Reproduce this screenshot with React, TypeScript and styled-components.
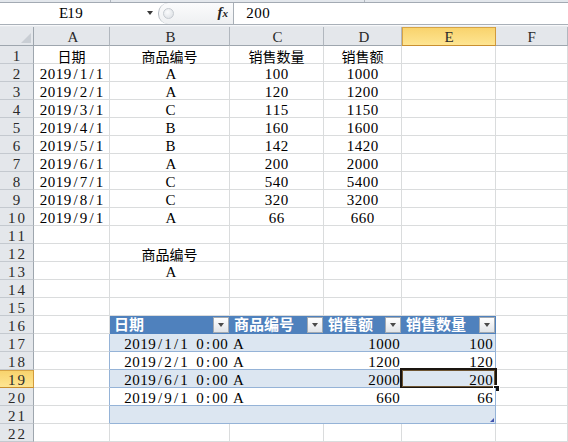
import React from 'react';
import styled, { createGlobalStyle } from 'styled-components';

const SERIF = `"Liberation Serif", "DejaVu Serif", serif`;
const CJK = `"Noto Sans CJK SC", "Noto Sans", sans-serif`;

const GlobalStyle = createGlobalStyle`
  html, body { margin: 0; padding: 0; background: #fff; overflow: hidden; }
  body { width: 568px; height: 442px; }
`;

const Window = styled.div`
  width: 568px;
  height: 442px;
  overflow: hidden;
  display: flex;
  flex-direction: column;
  background: #fff;
`;

const TopStrip = styled.div`
  height: 2px;
  background: #e3e7ec;
  border-bottom: 1px solid #a3aab3;
  display: flex;
`;

const StripSeg = styled.div<{ $w: number }>`
  box-sizing: border-box;
  width: ${(p) => p.$w}px;
  border-right: 1px solid #b0b6be;
`;

const FormulaBar = styled.div`
  height: 21px;
  display: flex;
  align-items: stretch;
  background: #fff;
  border-bottom: 1px solid #a9b0b8;
`;

const NameBox = styled.div`
  width: 142px;
  text-align: center;
  font-family: ${SERIF};
  font-size: 15px;
  line-height: 21px;
  box-sizing: border-box;
  color: #000;
`;

const DropArrow = styled.div`
  width: 16px;
  display: flex;
  align-items: center;
  justify-content: center;
  &::after {
    content: '';
    border-left: 3.5px solid transparent;
    border-right: 3.5px solid transparent;
    border-top: 4px solid #3a3a3a;
  }
`;

const Grip = styled.div`
  width: 76px;
  box-sizing: border-box;
  display: flex;
  align-items: center;
  background: linear-gradient(#fbfbfc, #eef0f2);
  border-left: 1px solid #b7bdc4;
  border-right: 1px solid #a8afb7;
  border-top-left-radius: 10px;
  border-bottom-left-radius: 10px;
`;

const Knob = styled.div`
  width: 9px;
  height: 9px;
  margin-left: 4px;
  border-radius: 50%;
  border: 1px solid #c5cad0;
  background: radial-gradient(circle at 40% 35%, #fafbfc, #d9dde2);
`;

const Fx = styled.div`
  margin-left: auto;
  margin-right: 5px;
  font-family: ${SERIF};
  font-style: italic;
  font-weight: bold;
  font-size: 15px;
  line-height: 15px;
  color: #222;
  & > span {
    font-size: 11px;
  }
`;

const FormulaInput = styled.div`
  flex: 1;
  padding-left: 12px;
  font-family: ${SERIF};
  font-size: 15px;
  line-height: 21px;
  color: #000;
`;

const Gap = styled.div`
  height: 3px;
  background: #e8ebef;
  border-top: 1px solid #f7f8fa;
  box-sizing: border-box;
`;

const Sheet = styled.div`
  display: grid;
  grid-template-columns: 34px 76px 120px 94px 78px 94px 1fr;
  grid-template-rows: 19px repeat(22, 18px);
`;

const Corner = styled.div`
  box-sizing: border-box;
  background: #e4e7eb;
  border-right: 1px solid #9ea6ae;
  border-bottom: 1px solid #9ea6ae;
  display: flex;
  align-items: flex-end;
  justify-content: flex-end;
  padding: 0 2px 2px 0;
  &::after {
    content: '';
    width: 0;
    height: 0;
    border-left: 10px solid transparent;
    border-bottom: 10px solid #c9ced4;
  }
`;

const ColHead = styled.div<{ $active?: boolean }>`
  box-sizing: border-box;
  background: ${(p) => (p.$active ? 'linear-gradient(#f8d26b, #fee592)' : '#e4e7eb')};
  border-right: 1px solid ${(p) => (p.$active ? '#d19a3c' : '#b1b7be')};
  border-bottom: 1px solid ${(p) => (p.$active ? '#c98f30' : '#9ea6ae')};
  box-shadow: ${(p) => (p.$active ? 'inset 1px 1px 0 #d7a445' : 'none')};
  text-align: center;
  font-family: ${SERIF};
  font-size: 15px;
  line-height: 18px;
  padding-top: 1px;
  color: #2a2a2a;
`;

const RowHead = styled.div<{ $active?: boolean }>`
  box-sizing: border-box;
  background: ${(p) => (p.$active ? 'linear-gradient(#f8d26b, #fee592)' : '#e4e7eb')};
  border-right: 1px solid ${(p) => (p.$active ? '#d19a3c' : '#9ea6ae')};
  border-bottom: 1px solid ${(p) => (p.$active ? '#c98f30' : '#c4c9cf')};
  box-shadow: ${(p) => (p.$active ? 'inset 0 1px 0 #d7a445' : 'none')};
  text-align: center;
  font-family: ${SERIF};
  font-size: 15px;
  line-height: 18px;
  padding-top: 1px;
  color: #2a2a2a;
`;

type Align = 'left' | 'center' | 'right';

const Cell = styled.div<{ $align?: Align; $cjk?: boolean; $edge?: string }>`
  box-sizing: border-box;
  border-right: 1px solid ${(p) => p.$edge ?? '#dadcdd'};
  border-bottom: 1px solid #dadcdd;
  text-align: ${(p) => p.$align ?? 'center'};
  white-space: nowrap;
  font-family: ${(p) => (p.$cjk ? CJK : SERIF)};
  font-size: ${(p) => (p.$cjk ? '14px' : '15px')};
  line-height: 18px;
  padding: 1px 2px 0;
  color: #000;
`;

const Table = styled.div`
  grid-column: 3 / 7;
  grid-row: 17 / 23;
  display: grid;
  grid-template-columns: 120px 94px 78px 94px;
  grid-template-rows: repeat(6, 18px);
`;

const THead = styled.div`
  background: #4f81bd;
  display: flex;
  align-items: center;
  justify-content: space-between;
  padding: 0 1px 0 4px;
`;

const THeadText = styled.span`
  align-self: flex-start;
  font-family: ${CJK};
  font-weight: bold;
  font-size: 15px;
  line-height: 16px;
  color: #fff;
  white-space: nowrap;
`;

const FilterBtn = styled.span`
  flex: 0 0 auto;
  width: 16px;
  height: 16px;
  box-sizing: border-box;
  border: 1px solid #a3aab2;
  background: linear-gradient(#ffffff, #e1e4e8);
  display: flex;
  align-items: center;
  justify-content: center;
  &::after {
    content: '';
    border-left: 3.5px solid transparent;
    border-right: 3.5px solid transparent;
    border-top: 4px solid #4a4a4a;
  }
`;

const TCell = styled.div<{ $band: boolean; $align: Align; $last: boolean }>`
  position: relative;
  box-sizing: border-box;
  background: ${(p) => (p.$band ? '#dce6f1' : '#fff')};
  border-bottom: 1px solid #95b3d7;
  border-right: ${(p) => (p.$last ? '1px solid #95b3d7' : 'none')};
  text-align: ${(p) => p.$align};
  white-space: nowrap;
  font-family: ${SERIF};
  font-size: 15px;
  line-height: 18px;
  padding: ${(p) => (p.$align === 'left' ? '1px 1px 0 3px' : '1px 2px 0 1px')};
  color: #000;
`;

const Ch = styled.span<{ $w: number }>`
  display: inline-block;
  width: ${(p) => p.$w}px;
  text-align: center;
`;

const Selection = styled.div`
  position: absolute;
  top: -2px;
  left: -2px;
  right: -2px;
  bottom: -2px;
  border: 2px solid #1a1510;
  box-shadow: inset 0 0 0 1px #6e5533;
  pointer-events: none;
`;

const FillHandle = styled.div`
  position: absolute;
  right: -5px;
  bottom: -5px;
  width: 5px;
  height: 5px;
  background: #111;
  border: 1px solid #fff;
`;

const ResizeCorner = styled.div`
  position: absolute;
  right: 1px;
  bottom: 1px;
  width: 0;
  height: 0;
  border-left: 4px solid transparent;
  border-bottom: 4px solid #4254b0;
`;

const Mono = ({ text, w = 8 }: { text: string | number; w?: number }) => (
  <>
    {Array.from(String(text)).map((c, i) => (
      <Ch key={i} $w={w}>
        {c === ' ' ? '\u00a0' : c}
      </Ch>
    ))}
  </>
);

const COLS = ['A', 'B', 'C', 'D', 'E', 'F'];

const topData: Record<number, string[]> = {
  1: ['日期', '商品编号', '销售数量', '销售额'],
  2: ['2019/1/1', 'A', '100', '1000'],
  3: ['2019/2/1', 'A', '120', '1200'],
  4: ['2019/3/1', 'C', '115', '1150'],
  5: ['2019/4/1', 'B', '160', '1600'],
  6: ['2019/5/1', 'B', '142', '1420'],
  7: ['2019/6/1', 'A', '200', '2000'],
  8: ['2019/7/1', 'C', '540', '5400'],
  9: ['2019/8/1', 'C', '320', '3200'],
  10: ['2019/9/1', 'A', '66', '660'],
  12: ['', '商品编号', '', ''],
  13: ['', 'A', '', ''],
};

const tableHeader = ['日期', '商品编号', '销售额', '销售数量'];
const tableBody = [
  ['2019/1/1 0:00', 'A', '1000', '100'],
  ['2019/2/1 0:00', 'A', '1200', '120'],
  ['2019/6/1 0:00', 'A', '2000', '200'],
  ['2019/9/1 0:00', 'A', '660', '66'],
  ['', '', '', ''],
];
const tableAlign: Align[] = ['right', 'left', 'right', 'right'];

const isCJK = (s: string) => /[\u4e00-\u9fff]/.test(s);

export default function App() {
  const rows: React.ReactNode[] = [];
  for (let r = 1; r <= 22; r++) {
    rows.push(
      <RowHead key={`h${r}`} $active={r === 19}>
        <Mono text={r} w={9.5} />
      </RowHead>
    );
    const inTable = r >= 16 && r <= 21;
    const vals = topData[r] ?? ['', '', '', ''];
    COLS.forEach((c, i) => {
      if (inTable && i >= 1 && i <= 4) return;
      const v = i < 4 ? vals[i] : '';
      const cjk = isCJK(v);
      rows.push(
        <Cell
          key={`${c}${r}`}
          $cjk={cjk}
          $edge={i === 0 && r >= 17 && r <= 21 ? '#95b3d7' : undefined}
        >
          {cjk ? v : <Mono text={v} />}
        </Cell>
      );
    });
  }

  return (
    <Window>
      <GlobalStyle />
      <TopStrip>
        <StripSeg $w={111} />
        <StripSeg $w={254} />
      </TopStrip>
      <FormulaBar>
        <NameBox>
          <Mono text="E19" />
        </NameBox>
        <DropArrow />
        <Grip>
          <Knob />
          <Fx>
            f<span>x</span>
          </Fx>
        </Grip>
        <FormulaInput>
          <Mono text="200" />
        </FormulaInput>
      </FormulaBar>
      <Gap />
      <Sheet>
        <Corner />
        {COLS.map((c) => (
          <ColHead key={c} $active={c === 'E'}>
            <Mono text={c} />
          </ColHead>
        ))}
        {rows}
        <Table>
          {tableHeader.map((h) => (
            <THead key={h}>
              <THeadText>{h}</THeadText>
              <FilterBtn />
            </THead>
          ))}
          {tableBody.map((row, ri) =>
            row.map((v, ci) => (
              <TCell
                key={`${ri}-${ci}`}
                $band={ri % 2 === 0}
                $align={tableAlign[ci]}
                $last={ci === 3}
              >
                <Mono text={v} />
                {ri === 2 && ci === 3 && (
                  <Selection>
                    <FillHandle />
                  </Selection>
                )}
                {ri === 4 && ci === 3 && <ResizeCorner />}
              </TCell>
            ))
          )}
        </Table>
      </Sheet>
    </Window>
  );
}
